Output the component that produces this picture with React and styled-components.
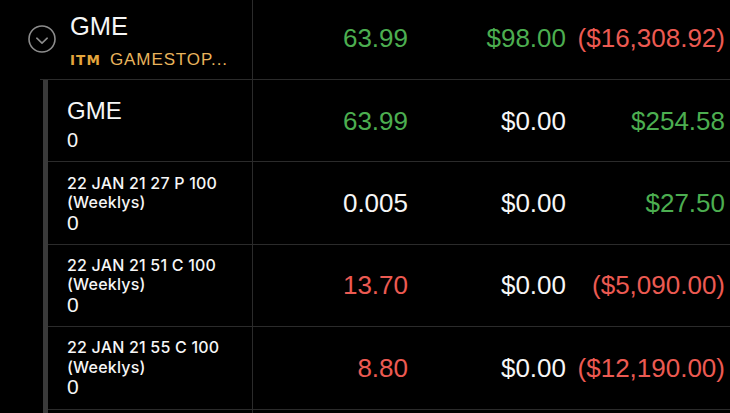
import React from 'react';
import styled, { createGlobalStyle } from 'styled-components';

const LINE = '#2b2b2b';
const BAR = '#3a3a3a';
const GREEN = '#4cae50';
const RED = '#ec5a52';
const WHITE = '#f6f6f6';
const AMBER = '#e9b45c';

const tones = { green: GREEN, red: RED, white: WHITE };

const GlobalStyle = createGlobalStyle`
  html, body { margin: 0; padding: 0; background: #000; }
  body {
    width: 730px;
    height: 413px;
    overflow: hidden;
    font-family: "Liberation Sans", Arial, sans-serif;
    color: ${WHITE};
  }
`;

const Page = styled.div`
  width: 730px;
  height: 413px;
  overflow: hidden;
  background: #000;
`;

const HeaderRow = styled.div`
  display: grid;
  grid-template-columns: 253px 155px 158px 159px;
  height: 79px;
`;

const HeaderName = styled.div`
  display: flex;
  align-items: center;
  gap: 14px;
  padding-left: 28px;
  border-right: 1px solid ${LINE};
  box-sizing: border-box;
`;

const ToggleIcon = styled.svg`
  width: 28px;
  height: 28px;
  flex: none;
  margin-bottom: 2px;
`;

const HeaderText = styled.div`
  display: flex;
  flex-direction: column;
  padding-top: 3px;
`;

const Symbol = styled.div`
  font-size: 25.5px;
  line-height: 25px;
  color: ${WHITE};
`;

const SubLine = styled.div`
  display: flex;
  align-items: baseline;
  gap: 9px;
  margin-top: 12px;
  line-height: 17px;
`;

const Badge = styled.span`
  font-family: "DejaVu Sans", sans-serif;
  font-weight: 700;
  font-size: 13.5px;
  letter-spacing: 1.1px;
  color: #e3a53c;
`;

const Company = styled.span`
  font-size: 17px;
  letter-spacing: 0.9px;
  color: ${AMBER};
`;

const NumCell = styled.div`
  display: flex;
  align-items: center;
  justify-content: flex-end;
  font-size: 26px;
  line-height: 26px;
  color: ${(p) => tones[p.$tone]};
  padding-bottom: ${(p) => (p.$lift ? '4px' : '0')};
  white-space: nowrap;
`;

const Children = styled.div`
  margin-left: 40px;
  border-top: 1px solid ${LINE};
  padding-left: 3px;
`;

const ChildList = styled.div`
  border-left: 5px solid ${BAR};
`;

const ChildRow = styled.div`
  display: grid;
  grid-template-columns: 205px 155px 158px 159px;
  height: 81.4px;
  border-bottom: 1px solid ${LINE};
`;

const ChildName = styled.div`
  display: flex;
  flex-direction: column;
  justify-content: center;
  padding-left: 19px;
  padding-top: ${(p) => (p.$stock ? '8px' : '0')};
  border-right: 1px solid ${LINE};
  box-sizing: border-box;
`;

const StockTitle = styled.div`
  font-size: 24px;
  line-height: 24px;
  color: ${WHITE};
`;

const ContractLine = styled.div`
  font-family: Inter, "Liberation Sans", sans-serif;
  font-weight: 500;
  font-size: 16px;
  line-height: 19.5px;
  letter-spacing: 0.2px;
  color: ${WHITE};
`;

const Qty = styled.div`
  font-size: ${(p) => (p.$stock ? '20px' : '21px')};
  line-height: ${(p) => (p.$stock ? '20px' : '21px')};
  margin-top: ${(p) => (p.$stock ? '7.5px' : '-1px')};
  color: ${WHITE};
`;

const rows = [
  { stock: true, name: 'GME', qty: '0', price: ['63.99', 'green'], cost: ['$0.00', 'white'], pl: ['$254.58', 'green'] },
  { name: '22 JAN 21 27 P 100', qty: '0', price: ['0.005', 'white'], cost: ['$0.00', 'white'], pl: ['$27.50', 'green'] },
  { name: '22 JAN 21 51 C 100', qty: '0', price: ['13.70', 'red'], cost: ['$0.00', 'white'], pl: ['($5,090.00)', 'red'] },
  { name: '22 JAN 21 55 C 100', qty: '0', price: ['8.80', 'red'], cost: ['$0.00', 'white'], pl: ['($12,190.00)', 'red'] },
];

export default function App() {
  return (
    <Page>
      <GlobalStyle />
      <HeaderRow>
        <HeaderName>
          <ToggleIcon viewBox="0 0 28 28" fill="none">
            <circle cx="14" cy="14" r="13" stroke="#8c8c8c" strokeWidth="1.6" />
            <path d="M8.8 13.2 L14 18.2 L19.2 13.2" stroke="#8c8c8c" strokeWidth="1.6" strokeLinecap="round" strokeLinejoin="round" />
          </ToggleIcon>
          <HeaderText>
            <Symbol>GME</Symbol>
            <SubLine>
              <Badge>ITM</Badge>
              <Company>GAMESTOP...</Company>
            </SubLine>
          </HeaderText>
        </HeaderName>
        <NumCell $tone="green" $lift>63.99</NumCell>
        <NumCell $tone="green" $lift>$98.00</NumCell>
        <NumCell $tone="red" $lift>($16,308.92)</NumCell>
      </HeaderRow>
      <Children>
        <ChildList>
          {rows.map((r, i) => (
            <ChildRow key={i}>
              <ChildName $stock={r.stock}>
                {r.stock ? (
                  <StockTitle>{r.name}</StockTitle>
                ) : (
                  <>
                    <ContractLine>{r.name}</ContractLine>
                    <ContractLine>(Weeklys)</ContractLine>
                  </>
                )}
                <Qty $stock={r.stock}>{r.qty}</Qty>
              </ChildName>
              <NumCell $tone={r.price[1]}>{r.price[0]}</NumCell>
              <NumCell $tone={r.cost[1]}>{r.cost[0]}</NumCell>
              <NumCell $tone={r.pl[1]}>{r.pl[0]}</NumCell>
            </ChildRow>
          ))}
          <ChildRow>
            <ChildName />
          </ChildRow>
        </ChildList>
      </Children>
    </Page>
  );
}
